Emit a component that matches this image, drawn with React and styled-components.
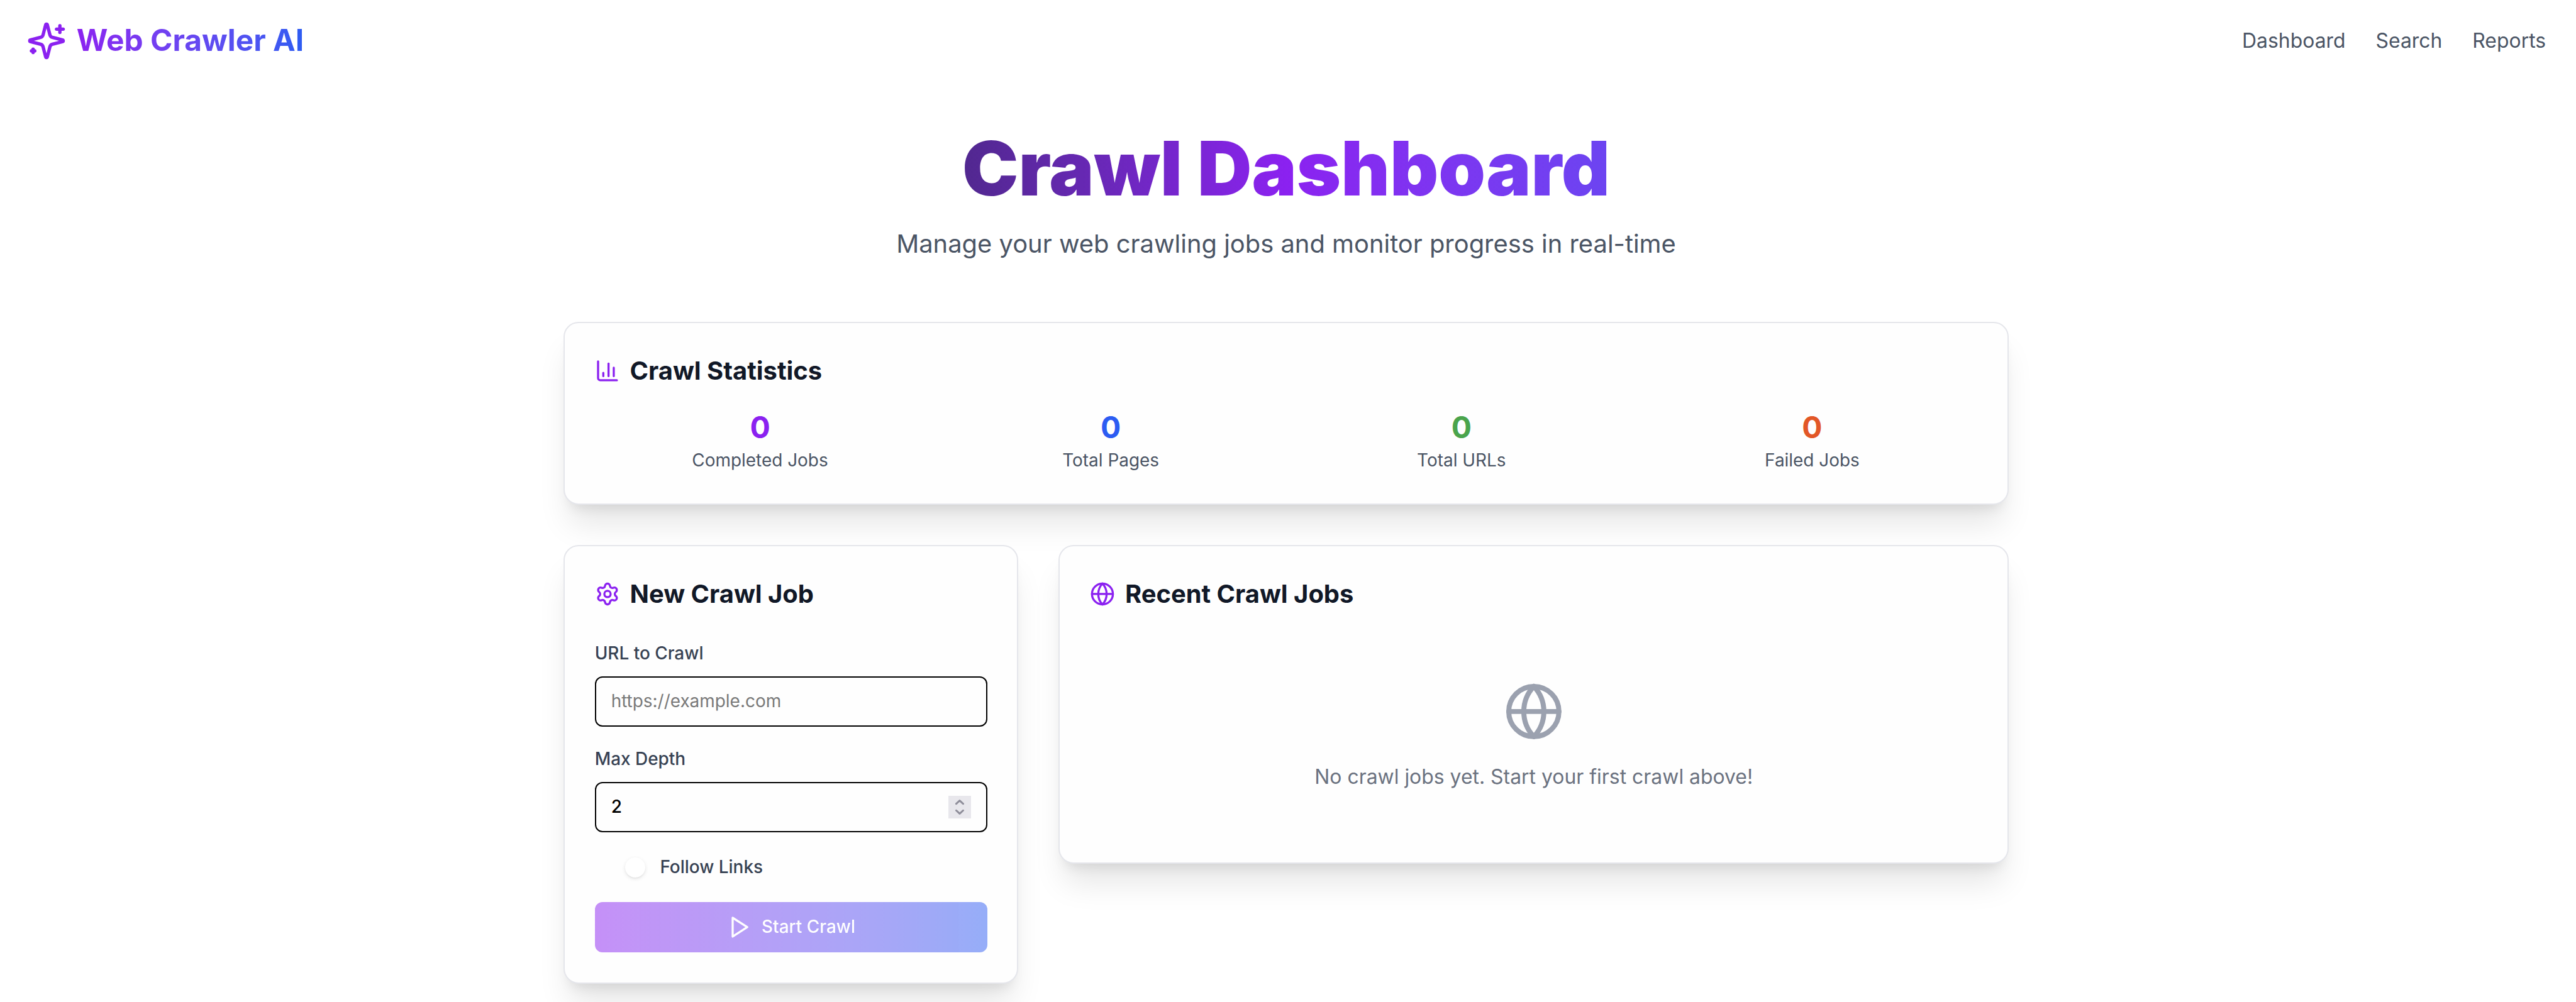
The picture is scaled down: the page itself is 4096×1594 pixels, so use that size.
import React, { useState } from "react";
import styled, { createGlobalStyle } from "styled-components";
import { ChartColumn, Globe, Settings } from "lucide-react";

const color = {
  page: "#ffffff",
  card: "#fefefe",
  purple: "#8b21f0",
  blue: "#2c5cf2",
  green: "#4aa44c",
  orange: "#e25727",
  ink: "#111827",
  label: "#374253",
  body: "#4b5565",
  muted: "#6b7280",
  faint: "#9ba1af",
  line: "#e5e6eb",
};

const GlobalStyle = createGlobalStyle`
  *, *::before, *::after { box-sizing: border-box; margin: 0; padding: 0; }
  html { font-size: 31.922px; }
  body {
    background: ${color.page};
    color: ${color.ink};
    font-family: Inter, "Liberation Sans", sans-serif;
    line-height: 1.5;
    -webkit-font-smoothing: antialiased;
  }
  svg { display: block; flex: none; }
`;

const Page = styled.div`
  height: 100vh;
  overflow: hidden;
`;

const NavBar = styled.nav`
  display: flex;
  align-items: center;
  justify-content: space-between;
  padding: 1.03125rem 1.5rem 1rem 1.3125rem;
`;

const Brand = styled.div`
  display: flex;
  align-items: center;
  gap: 0.5rem;
  color: ${color.purple};
`;

const BrandName = styled.span`
  font-size: 1.5rem;
  line-height: 2rem;
  font-weight: 700;
  color: transparent;
  background: linear-gradient(to right in oklab, ${color.purple}, ${color.blue});
  background-clip: text;
  -webkit-background-clip: text;
`;

const NavLinks = styled.div`
  display: flex;
  gap: 1.5rem;
`;

const NavLink = styled.a`
  font-size: 1rem;
  line-height: 1.5rem;
  color: ${color.body};
`;

const Content = styled.main`
  display: flex;
  flex-direction: column;
  align-items: center;
  padding: 2.5rem 0.1875rem 0 0;
`;

const Container = styled.div`
  width: 72rem;
`;

const Hero = styled.header`
  display: flex;
  flex-direction: column;
  gap: 1rem;
  margin-bottom: 3rem;
  text-align: center;
`;

const HeroTitle = styled.h1`
  font-size: 3.75rem;
  line-height: 1;
  font-weight: 900;
  color: transparent;
  background: linear-gradient(to right in oklab, #111827, ${color.purple}, ${color.blue});
  background-clip: text;
  -webkit-background-clip: text;
`;

const HeroText = styled.p`
  font-size: 1.25rem;
  line-height: 1.75rem;
  color: ${color.body};
`;

const Card = styled.section`
  padding: 1.5rem;
  background: ${color.card};
  border: 2px solid ${color.line};
  border-radius: 0.75rem;
  box-shadow: 0 1.25rem 1.5625rem -0.3125rem rgba(0, 0, 0, 0.1),
    0 0.5rem 0.625rem -0.375rem rgba(0, 0, 0, 0.1);
`;

const CardTitle = styled.h2`
  display: flex;
  align-items: center;
  gap: 0.5rem;
  margin-bottom: ${(p) => p.$gap};
  font-size: 1.25rem;
  line-height: 1.75rem;
  font-weight: 700;

  svg {
    width: 1.25rem;
    height: 1.25rem;
    color: ${color.purple};
  }
`;

const StatGrid = styled.div`
  display: grid;
  grid-template-columns: repeat(4, 1fr);
  gap: 1rem;
  text-align: center;
`;

const StatValue = styled.div`
  font-size: 1.5rem;
  line-height: 2rem;
  font-weight: 700;
  color: ${(p) => p.$tone};
`;

const StatLabel = styled.div`
  font-size: 0.875rem;
  line-height: 1.25rem;
  color: ${color.body};
`;

const Columns = styled.div`
  display: grid;
  grid-template-columns: repeat(3, 1fr);
  align-items: start;
  gap: 2rem;
  margin-top: 2rem;
`;

const JobsCard = styled(Card)`
  grid-column: span 2;
`;

const Form = styled.form`
  display: flex;
  flex-direction: column;
  gap: 1rem;
`;

const Field = styled.div`
  display: flex;
  flex-direction: column;
  gap: 0.5rem;
`;

const Label = styled.label`
  font-size: 0.875rem;
  line-height: 1.25rem;
  font-weight: 500;
  color: ${color.label};
`;

const InputBox = styled.div`
  display: flex;
  align-items: center;
  height: 2.5rem;
  padding: 0 0.75rem;
  border: 2px solid #000;
  border-radius: 0.375rem;
`;

const Input = styled.input`
  flex: 1;
  min-width: 0;
  border: 0;
  outline: 0;
  background: transparent;
  font: inherit;
  font-size: 0.875rem;
  line-height: 1.25rem;
  font-weight: ${(p) => (p.$strong ? 500 : 400)};
  color: #000;

  &::placeholder {
    color: #7a7a7a;
    opacity: 1;
  }
`;

const Stepper = styled.span`
  width: 1.125rem;
  height: 1.125rem;
  background: #e8e7ec;
  color: #8f8e9a;

  svg {
    width: 100%;
    height: 100%;
  }
`;

const SwitchRow = styled.div`
  display: flex;
  align-items: center;
  gap: 0.5rem;
`;

const Switch = styled.button`
  display: flex;
  align-items: center;
  justify-content: flex-end;
  width: 2.75rem;
  height: 1.5rem;
  padding: 0 0.25rem;
  border: 0;
  border-radius: 1rem;
  background: transparent;
`;

const SwitchThumb = styled.span`
  width: 1rem;
  height: 1rem;
  border-radius: 50%;
  background: #fff;
  box-shadow: 0 0.0625rem 0.1875rem rgba(0, 0, 0, 0.1),
    0 0.0625rem 0.125rem -0.0625rem rgba(0, 0, 0, 0.1);
`;

const SubmitButton = styled.button`
  display: flex;
  align-items: center;
  justify-content: center;
  gap: 0.5rem;
  height: 2.5rem;
  border: 0;
  border-radius: 0.375rem;
  background: linear-gradient(to right in oklab, ${color.purple}, ${color.blue});
  opacity: 0.5;
  font: inherit;
  font-size: 0.875rem;
  line-height: 1.25rem;
  font-weight: 500;
  color: #fff;
`;

const EmptyState = styled.div`
  display: flex;
  flex-direction: column;
  align-items: center;
  gap: 1rem;
  padding: 2rem 0;
  color: ${color.muted};
  line-height: 1.5rem;

  svg {
    width: 3rem;
    height: 3rem;
    color: ${color.faint};
  }
`;

const stroke = {
  fill: "none",
  stroke: "currentColor",
  strokeWidth: 2,
  strokeLinecap: "round",
  strokeLinejoin: "round",
};

const SparklesIcon = () => (
  <svg width="2rem" height="2rem" viewBox="0 0 24 24" {...stroke}>
    <path d="M9.937 15.5A2 2 0 0 0 8.5 14.063l-6.135-1.582a.5.5 0 0 1 0-.962L8.5 9.936A2 2 0 0 0 9.937 8.5l1.582-6.135a.5.5 0 0 1 .963 0L14.063 8.5A2 2 0 0 0 15.5 9.937l6.135 1.581a.5.5 0 0 1 0 .964L15.5 14.063a2 2 0 0 0-1.437 1.437l-1.582 6.135a.5.5 0 0 1-.963 0z" />
    <path d="M20 3v4" />
    <path d="M22 5h-4" />
    <path d="M4 17v2" />
    <path d="M5 18H3" />
  </svg>
);

const PlayIcon = () => (
  <svg width="1.25rem" height="1.25rem" viewBox="0 0 24 24" {...stroke}>
    <polygon points="6 3 20 12 6 21 6 3" />
  </svg>
);

const StepperIcon = () => (
  <svg viewBox="0 0 36 36" {...stroke} strokeWidth={3}>
    <path d="M12.5 12.7 18 7.6l5.5 5.1" />
    <path d="M12.5 23.3l5.5 5.1 5.5-5.1" />
  </svg>
);

const stats = [
  { label: "Completed Jobs", value: 0, tone: color.purple },
  { label: "Total Pages", value: 0, tone: color.blue },
  { label: "Total URLs", value: 0, tone: color.green },
  { label: "Failed Jobs", value: 0, tone: color.orange },
];

export default function App() {
  const [url, setUrl] = useState("");
  const [depth, setDepth] = useState("2");

  return (
    <Page>
      <GlobalStyle />
      <NavBar>
        <Brand>
          <SparklesIcon />
          <BrandName>Web Crawler AI</BrandName>
        </Brand>
        <NavLinks>
          <NavLink>Dashboard</NavLink>
          <NavLink>Search</NavLink>
          <NavLink>Reports</NavLink>
        </NavLinks>
      </NavBar>

      <Content>
        <Container>
          <Hero>
            <HeroTitle>Crawl Dashboard</HeroTitle>
            <HeroText>
              Manage your web crawling jobs and monitor progress in real-time
            </HeroText>
          </Hero>

          <Card>
            <CardTitle $gap="1rem">
              <ChartColumn />
              Crawl Statistics
            </CardTitle>
            <StatGrid>
              {stats.map((s) => (
                <div key={s.label}>
                  <StatValue $tone={s.tone}>{s.value}</StatValue>
                  <StatLabel>{s.label}</StatLabel>
                </div>
              ))}
            </StatGrid>
          </Card>

          <Columns>
            <Card>
              <CardTitle $gap="1.5rem">
                <Settings />
                New Crawl Job
              </CardTitle>
              <Form onSubmit={(e) => e.preventDefault()}>
                <Field>
                  <Label htmlFor="url">URL to Crawl</Label>
                  <InputBox>
                    <Input
                      id="url"
                      placeholder="https://example.com"
                      value={url}
                      onChange={(e) => setUrl(e.target.value)}
                    />
                  </InputBox>
                </Field>
                <Field>
                  <Label htmlFor="depth">Max Depth</Label>
                  <InputBox>
                    <Input
                      id="depth"
                      inputMode="numeric"
                      $strong
                      value={depth}
                      onChange={(e) => setDepth(e.target.value)}
                    />
                    <Stepper>
                      <StepperIcon />
                    </Stepper>
                  </InputBox>
                </Field>
                <SwitchRow>
                  <Switch type="button" role="switch" aria-checked="true">
                    <SwitchThumb />
                  </Switch>
                  <Label as="span">Follow Links</Label>
                </SwitchRow>
                <SubmitButton disabled>
                  <PlayIcon />
                  Start Crawl
                </SubmitButton>
              </Form>
            </Card>

            <JobsCard>
              <CardTitle $gap="1.5rem">
                <Globe />
                Recent Crawl Jobs
              </CardTitle>
              <EmptyState>
                <Globe />
                <p>No crawl jobs yet. Start your first crawl above!</p>
              </EmptyState>
            </JobsCard>
          </Columns>
        </Container>
      </Content>
    </Page>
  );
}
